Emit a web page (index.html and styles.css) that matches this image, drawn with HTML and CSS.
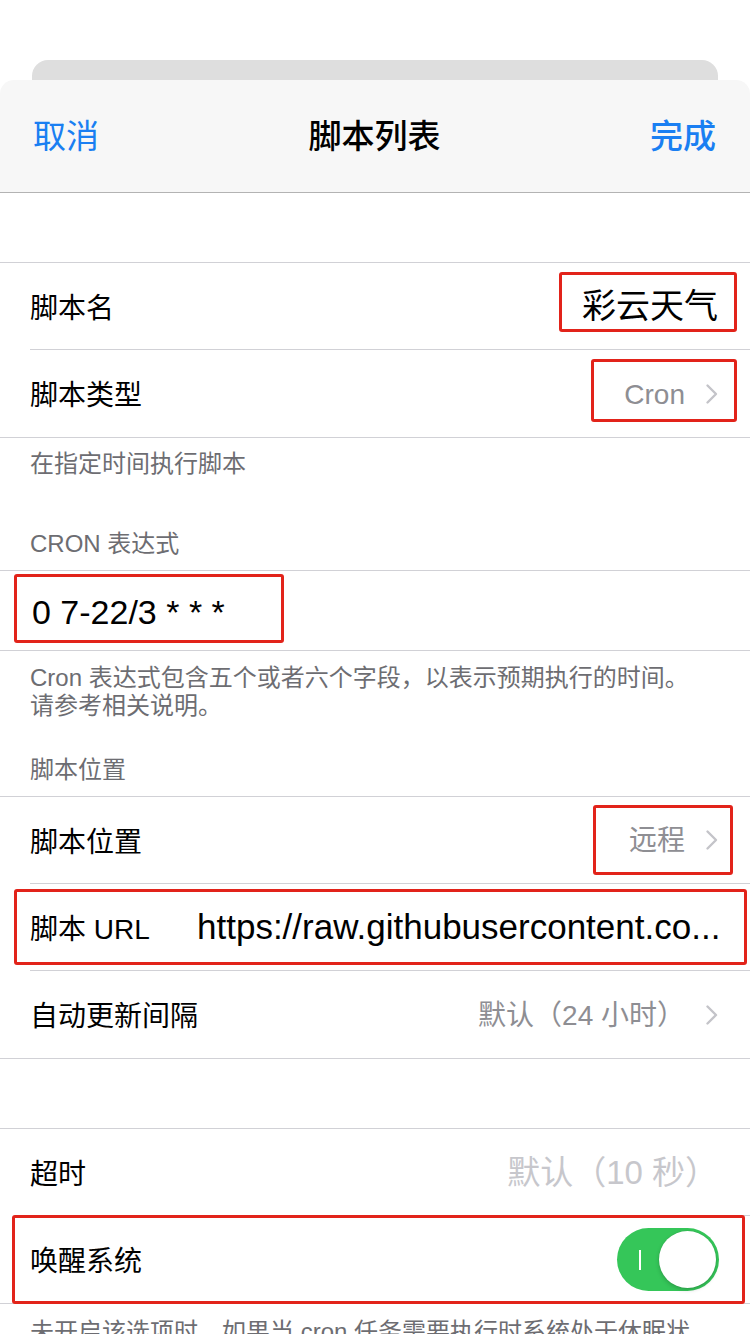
FILE: index.html
```html
<!DOCTYPE html>
<html lang="zh-CN">
<head>
<meta charset="utf-8">
<title>脚本列表</title>
<link rel="stylesheet" href="styles.css">
</head>
<body>
<div class="top-gap"></div>
<div class="back-card"></div>
<div class="sheet">
  <header class="nav">
    <span class="nav-btn cancel">取消</span>
    <h1 class="nav-title">脚本列表</h1>
    <span class="nav-btn done">完成</span>
  </header>
  <main class="content">
    <div class="spacer"></div>
    <section class="group">
      <div class="row">
        <div class="cell">
          <span class="label">脚本名</span>
          <span class="value strong">彩云天气</span>
        </div>
        <i class="mark m-name"></i>
      </div>
      <div class="row">
        <div class="cell">
          <span class="label">脚本类型</span>
          <span class="value muted">Cron</span>
          <svg class="chev" viewBox="0 0 14 22" width="14" height="22"><path d="M2.5 2.5 L11 11 L2.5 19.5" fill="none" stroke="#c4c4c9" stroke-width="2.4" stroke-linecap="round" stroke-linejoin="round"/></svg>
        </div>
        <i class="mark m-type"></i>
      </div>
    </section>
    <p class="note first">在指定时间执行脚本</p>
    <p class="head">CRON 表达式</p>
    <section class="group">
      <div class="row short">
        <div class="cell">
          <span class="input">0 7-22/3 * * *</span>
        </div>
        <i class="mark m-cron"></i>
      </div>
    </section>
    <p class="note multi">Cron 表达式包含五个或者六个字段，以表示预期执行的时间。<br>请参考相关说明。</p>
    <p class="head">脚本位置</p>
    <section class="group">
      <div class="row">
        <div class="cell">
          <span class="label">脚本位置</span>
          <span class="value muted">远程</span>
          <svg class="chev" viewBox="0 0 14 22" width="14" height="22"><path d="M2.5 2.5 L11 11 L2.5 19.5" fill="none" stroke="#c4c4c9" stroke-width="2.4" stroke-linecap="round" stroke-linejoin="round"/></svg>
        </div>
        <i class="mark m-loc"></i>
      </div>
      <div class="row">
        <div class="cell">
          <span class="label url-label">脚本 URL</span>
          <span class="url">https://raw.githubusercontent.co...</span>
        </div>
        <i class="mark m-url"></i>
      </div>
      <div class="row">
        <div class="cell">
          <span class="label">自动更新间隔</span>
          <span class="value muted">默认（24 小时）</span>
          <svg class="chev" viewBox="0 0 14 22" width="14" height="22"><path d="M2.5 2.5 L11 11 L2.5 19.5" fill="none" stroke="#c4c4c9" stroke-width="2.4" stroke-linecap="round" stroke-linejoin="round"/></svg>
        </div>
      </div>
    </section>
    <div class="spacer"></div>
    <section class="group">
      <div class="row">
        <div class="cell">
          <span class="label">超时</span>
          <span class="value placeholder">默认（10 秒）</span>
        </div>
      </div>
      <div class="row">
        <div class="cell">
          <span class="label">唤醒系统</span>
          <span class="toggle"><span class="toggle-i"></span><span class="knob"></span></span>
        </div>
        <i class="mark m-wake"></i>
      </div>
    </section>
    <p class="note last">未开启该选项时，如果当 cron 任务需要执行时系统处于休眠状</p>
  </main>
</div>
</body>
</html>
```

FILE: styles.css
```css
* { box-sizing: border-box; }

html, body {
  margin: 0;
  padding: 0;
  background: #ffffff;
}

body {
  width: 750px;
  height: 1334px;
  overflow: hidden;
  font-family: "Liberation Sans", "Noto Sans CJK SC", sans-serif;
  color: #000;
}

.top-gap { height: 60px; }

.back-card {
  height: 20px;
  margin: 0 32px;
  background: #dedede;
  border-radius: 16px 16px 0 0;
}

.sheet {
  background: #ffffff;
  border-radius: 14px 14px 0 0;
  overflow: hidden;
}

.nav {
  height: 113px;
  display: grid;
  grid-template-columns: 1fr auto 1fr;
  align-items: center;
  padding: 0 34px 0 33px;
  background: #f7f7f7;
  border-bottom: 1px solid #b3b3b3;
}

.nav-btn {
  font-size: 33px;
  color: #1a7ff2;
  line-height: 40px;
  padding-top: 2px;
}

.cancel { justify-self: start; }

.done {
  justify-self: end;
  font-weight: 500;
}

.nav-title {
  margin: 0;
  font-size: 33px;
  font-weight: 500;
  line-height: 40px;
  padding-top: 2px;
}

.content { background: #fff; }

.spacer { height: 69px; }

.group {
  border-top: 1px solid #d1d1d6;
  border-bottom: 1px solid #d1d1d6;
}

.row {
  position: relative;
  padding-left: 30px;
  height: 87px;
}

.row.short { height: 79px; }

.cell {
  height: 100%;
  display: flex;
  align-items: center;
  padding-right: 32px;
  border-bottom: 1px solid #d1d1d6;
}

.row:last-child .cell { border-bottom: none; }

.label {
  font-size: 28px;
  line-height: 36px;
  margin-top: 5px;
  flex: none;
}

.value {
  margin-left: auto;
  font-size: 28px;
  line-height: 36px;
  margin-top: 2px;
  white-space: nowrap;
}

.value.strong {
  font-size: 34px;
  line-height: 40px;
  margin-top: 0;
  color: #000;
}

.value.muted { color: #8e8e93; }

.value.placeholder {
  font-size: 33px;
  color: #c7c7cc;
}

.chev {
  flex: none;
  margin-left: 20px;
  margin-right: -1px;
}

.input {
  font-size: 34px;
  line-height: 40px;
  margin-left: 2px;
  margin-top: 2px;
}

.url-label { width: 167px; }

.url {
  font-size: 35px;
  line-height: 40px;
  white-space: nowrap;
}

.note, .head {
  margin: 0;
  padding-left: 30px;
  font-size: 24px;
  color: #6d6d72;
}

.note.first {
  padding-top: 10px;
  line-height: 32px;
}

.head {
  line-height: 32px;
  padding-bottom: 10px;
}

.note.first + .head { margin-top: 48px; }

.note.multi {
  padding-top: 13px;
  line-height: 28px;
  padding-right: 30px;
}

.note.multi + .head { margin-top: 34px; }

.note.last {
  padding-top: 12px;
  line-height: 32px;
  white-space: nowrap;
}

/* toggle switch */
.toggle {
  margin-left: auto;
  margin-right: -1px;
  position: relative;
  width: 102px;
  height: 63px;
  border-radius: 32px;
  background: #35c659;
  flex: none;
}

.toggle-i {
  position: absolute;
  left: 22px;
  top: 22px;
  width: 2px;
  height: 20px;
  background: #fff;
}

.knob {
  position: absolute;
  right: 3px;
  top: 3px;
  width: 57px;
  height: 57px;
  border-radius: 50%;
  background: #fff;
  box-shadow: 0 2px 4px rgba(0,0,0,0.18), 0 0 0 0.5px rgba(0,0,0,0.08);
}

/* red annotation boxes overlaying the screenshot */
.mark {
  position: absolute;
  border: 3px solid #e2231a;
  border-radius: 3px;
  pointer-events: none;
}

.m-name { left: 559px; top: 9px; width: 178px; height: 60px; }
.m-type { left: 591px; top: 9px; width: 146px; height: 63px; }
.m-cron { left: 14px; top: 3px; width: 270px; height: 69px; }
.m-loc  { left: 593px; top: 8px; width: 140px; height: 70px; }
.m-url  { left: 14px; top: 5px; width: 733px; height: 76px; }
.m-wake { left: 12px; top: -1px; width: 733px; height: 89px; }
```
